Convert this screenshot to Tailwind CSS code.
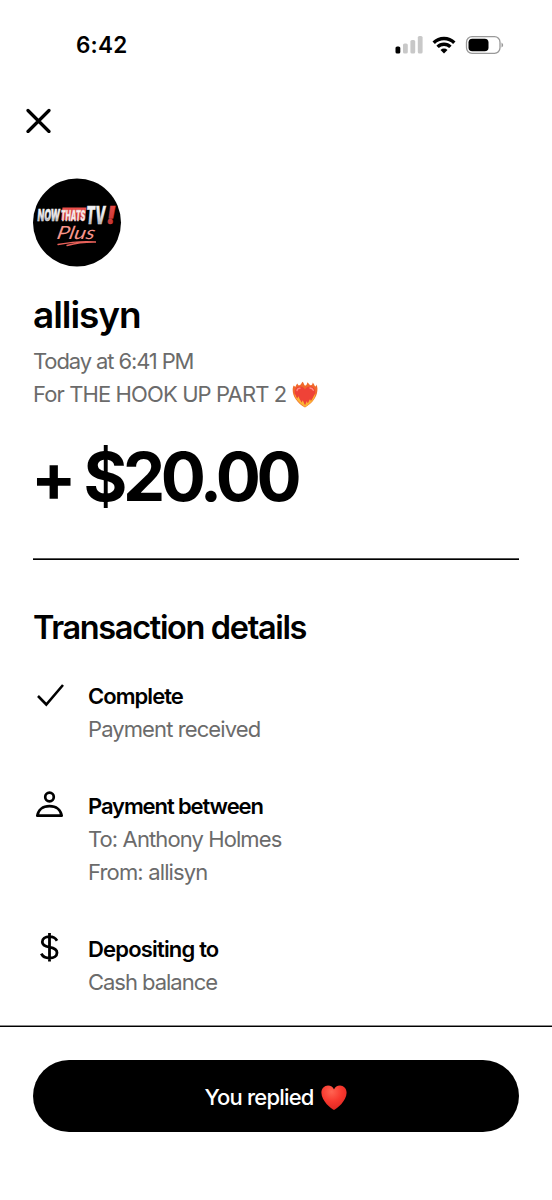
<!DOCTYPE html>
<html lang="en">
<head>
<meta charset="UTF-8"/>
<meta name="viewport" content="width=device-width,initial-scale=1.0"/>
<title>Payment receipt</title>
<script src="https://cdn.jsdelivr.net/npm/@tailwindcss/browser@4"></script>
</head>
<body class="bg-white text-black font-['Inter',sans-serif]">
<div class="flex h-[1200px] w-[552px] flex-col overflow-hidden">

  <!-- STATUS BAR -->
  <header class="flex h-[90px] shrink-0 items-center justify-between pr-[48px] pl-[76px]">
    <span class="text-[22.5px] font-semibold tracking-[0.2px]">6:42</span>
    <div class="flex items-center gap-[9px]">
      <svg class="h-[20px] w-[28px]" viewBox="0 0 28 20">
        <rect x="0.5" y="11.5" width="4.8" height="7" rx="1.6" fill="#000"/>
        <rect x="8" y="8.5" width="4.8" height="10" rx="1.6" fill="#c8c8c8"/>
        <rect x="15.4" y="5" width="4.8" height="13.5" rx="1.6" fill="#c8c8c8"/>
        <rect x="22.8" y="1" width="4.8" height="17.5" rx="1.6" fill="#c8c8c8"/>
      </svg>
      <svg class="h-[18px] w-[24px]" viewBox="0 0 24 18">
        <g fill="none" stroke="#000" stroke-width="3.4">
          <path d="M1.7 6.7A14.6 14.6 0 0 1 22.3 6.7"/>
          <path d="M5.6 10.9A9 9 0 0 1 18.4 10.9"/>
        </g>
        <path d="M8.5 14A5 5 0 0 1 15.5 14L12 17.5Z"/>
      </svg>
      <svg class="h-[20px] w-[39px]" viewBox="0 0 39 20">
        <rect x="1.5" y="1.7" width="33.5" height="16.6" rx="5.5" fill="none" stroke="#999" stroke-width="1.3"/>
        <rect x="3.5" y="3.7" width="20" height="12.6" rx="3.8" fill="#000"/>
        <path d="M36.5 7.5V12.5Q38.2 11.5 38.2 10Q38.2 8.5 36.5 7.5Z" fill="#999"/>
      </svg>
    </div>
  </header>

  <!-- DETAILS -->
  <main class="flex h-[935px] shrink-0 flex-col px-[33px]">
    <button class="mt-[18px] -ml-[7px] h-[25px] w-[25px]" aria-label="Close">
      <svg class="h-[25px] w-[25px]" viewBox="0 0 25 25" fill="none" stroke="#000" stroke-width="3.2" stroke-linecap="round">
        <path d="M2 2.5L23 23.5M23 2.5L2 23.5"/>
      </svg>
    </button>

    <svg class="mt-[45px] h-[89px] w-[89px]" viewBox="0 0 89 89">
      <defs>
        <linearGradient id="chrome" x1="0" y1="0" x2="0" y2="1">
          <stop offset="0" stop-color="#fff"/><stop offset=".55" stop-color="#e2e2e6"/><stop offset="1" stop-color="#8c8c94"/>
        </linearGradient>
        <linearGradient id="red" x1="0" y1="0" x2="0" y2="1">
          <stop offset="0" stop-color="#f0504c"/><stop offset="1" stop-color="#b8302f"/>
        </linearGradient>
      </defs>
      <circle cx="44" cy="44.5" r="44" fill="#000"/>
      <path d="M29.5 29.5H53.5L52 42H28Z" fill="url(#red)"/>
      <g font-family="Inter, sans-serif" font-style="italic" font-weight="900">
        <text x="4.5" y="43" font-size="16.5" textLength="22.5" lengthAdjust="spacingAndGlyphs" fill="url(#chrome)" stroke="#eee" stroke-width=".4">NOW</text>
        <text x="27.8" y="43" font-size="14" textLength="24.4" lengthAdjust="spacingAndGlyphs" fill="#f7eeee" stroke="#e9b4b1" stroke-width=".4">THATS</text>
        <text x="53" y="45.5" font-size="24" textLength="19.5" lengthAdjust="spacingAndGlyphs" fill="url(#chrome)" stroke="#ddd" stroke-width=".4">TV</text>
        <text x="73.5" y="45.5" font-size="25" textLength="9" lengthAdjust="spacingAndGlyphs" fill="url(#red)" stroke="#e04542" stroke-width=".4">!</text>
      </g>
      <!-- neon script word -->
      <text x="24" y="61.5" font-family="Lato, sans-serif" font-style="italic" font-weight="400" font-size="18" textLength="38" lengthAdjust="spacingAndGlyphs" fill="#f7948a" transform="translate(12 0) skewX(-12)">Plus</text>
      <path d="M25 66.500C38 64 52 63 63 64C52 63.800 43 65 34 67.500" fill="none" stroke="#e8615a" stroke-width="1.3" stroke-linecap="round"/>
    </svg>

    <h1 class="mt-[24px] text-[37px] leading-[48px] font-semibold tracking-[-1.05px]">allisyn</h1>
    <div class="mt-[6px] text-[22px] leading-[33px] text-[#6b6b6b]">
      <p class="tracking-[-1.12px]">Today at 6:41 PM</p>
      <div class="flex items-center">
        <span class="tracking-[-0.89px]">For THE HOOK UP PART 2</span>
        <svg class="ml-[6px] h-[27px] w-[26px]" viewBox="0 0 26 27">
          <path d="M13 26.5C5 22 .6 15 .7 9C.7 7 1 5.5 1.8 4.5C2.5 5.5 3 6 3.6 5.5C4 4.5 4.3 3.5 5.5 2.6C5.7 4 6.5 4.6 7.5 4.3C9 3.5 9.7 2 10.3 .7C12 1.6 11.7 3.3 12.7 4.4C13.4 5 14.7 4.4 15.5 1.2C16.7 2.3 17.5 4 18.8 4.3C20 4.3 20.5 3.2 20.7 1.5C22.4 3 22.3 5 23.2 5.4C24 5.4 24.2 4.5 24.4 3.6C25.7 6 25.7 9 25 12C23.5 18 19 23 13 26.5Z" fill="#f0692c"/>
          <path d="M13 24.5C6 20 2.7 15 2.9 10.8C3 7.4 5.3 5.6 8 5.6C10.3 5.6 12 6.7 13 8.5C14 6.7 15.8 5.6 18 5.6C20.8 5.6 23.1 7.5 23.1 10.8C23.1 15 19.5 20 13 24.5Z" fill="#ef4237"/>
          <path d="M13 26C7 22 3 17.5 2.5 13C4 14 4 16.5 5.2 17.5C5.8 16.5 6 16 6.6 15.2C6.8 18 9 19 9.5 21.5C10.3 20.8 10.3 20 10.6 19.3C11.8 20.8 12 22.8 13 24C14 22.8 13.8 21.5 14.8 20.2C15.5 21 15.2 21.8 15.7 22.3C17 20.8 16.8 19.5 18 18.3C18.6 18.9 18.5 19.5 19 20C20.8 18 21 15.5 23.5 12.5C23 18.5 19 22.5 13 26Z" fill="#fbb436"/>
          <path d="M5 9.5C5.3 8 6.5 7.2 8 7.2M18 7C19.7 7.2 20.8 8 21.3 9.3" fill="none" stroke="#ff8d80" stroke-width="1.3" stroke-linecap="round"/>
        </svg>
      </div>
    </div>
    <p class="mt-[26px] -ml-[2px] text-[67px] leading-[80px] font-bold tracking-[-4.4px]">+ $20.00</p>

    <hr class="mt-[41px] h-[2px] border-t border-b border-t-[#555] border-b-black"/>

    <h2 class="mt-[48px] text-[32.5px] leading-[40px] font-semibold tracking-[-1.35px]">Transaction details</h2>

    <section class="mt-[32px] flex gap-[22px]">
      <svg class="h-[33px] w-[33px] shrink-0" viewBox="0 0 33 33" fill="none" stroke="#000" stroke-width="2.6">
        <path d="M5 16L13.3 24.500L30 5"/>
      </svg>
      <div class="text-[22px] leading-[33px]">
        <h3 class="font-semibold tracking-[-0.95px]">Complete</h3>
        <p class="tracking-[-0.9px] text-[#6b6b6b]">Payment received</p>
      </div>
    </section>

    <section class="mt-[44px] flex gap-[22px]">
      <svg class="h-[33px] w-[33px] shrink-0" viewBox="0 0 33 33" fill="none" stroke="#000" stroke-width="2.7">
        <circle cx="16.5" cy="7" r="4.3"/>
        <path d="M4.3 25.7C5.2 19.8 9.8 16.100 16.5 16.100S27.800 19.800 28.700 25.700Z" stroke-linejoin="round"/>
      </svg>
      <div class="text-[22px] leading-[33px]">
        <h3 class="font-semibold tracking-[-1.1px]">Payment between</h3>
        <p class="tracking-[-0.9px] text-[#6b6b6b]">To: Anthony Holmes</p>
        <p class="tracking-[-0.85px] text-[#6b6b6b]">From: allisyn</p>
      </div>
    </section>

    <section class="mt-[44px] flex gap-[22px]">
      <svg class="h-[33px] w-[33px] shrink-0" viewBox="0 0 33 33" fill="none" stroke="#000" stroke-width="2.8">
        <path d="M16.5 0V28.5M24 7.7C22.5 5 19.8 3.7 16.5 3.7C12 3.7 9.3 5.8 9.3 8.9C9.3 12 11.8 13.2 16.5 14.1C21.5 15 24 16.5 24 19.7C24 22.9 21 25 16.5 25C12.7 25 9.7 23.5 8.3 20.6"/>
      </svg>
      <div class="text-[22px] leading-[33px]">
        <h3 class="font-semibold tracking-[-0.82px]">Depositing to</h3>
        <p class="tracking-[-1.03px] text-[#6b6b6b]">Cash balance</p>
      </div>
    </section>
  </main>

  <!-- REPLY BAR -->
  <footer class="shrink-0">
    <hr class="h-[2px] border-t border-b border-t-[#888] border-b-black"/>
    <div class="px-[33px] pt-[33px]">
      <button class="flex h-[72px] w-full items-center justify-center rounded-full bg-black pr-[1px] text-white">
        <span class="pt-[2px] text-[22px] font-medium tracking-[-0.8px]">You replied</span>
        <svg class="mt-[2px] ml-[7px] h-[25px] w-[26px]" viewBox="0 0 26 25">
          <defs>
            <radialGradient id="heart" cx=".4" cy=".25" r=".8">
              <stop offset="0" stop-color="#ff6452"/><stop offset=".5" stop-color="#f8392f"/><stop offset="1" stop-color="#dc2520"/>
            </radialGradient>
          </defs>
          <path d="M13 25C10.5 24 .4 16 .4 7.7C.4 3.5 3.5 .5 7 .5C9.8 .5 12 2 13 4.5C14 2 16.2 .5 19 .5C22.5 .5 25.6 3.5 25.6 7.7C25.6 16 15.5 24 13 25Z" fill="url(#heart)"/>
        </svg>
      </button>
    </div>
  </footer>
</div>
</body>
</html>
